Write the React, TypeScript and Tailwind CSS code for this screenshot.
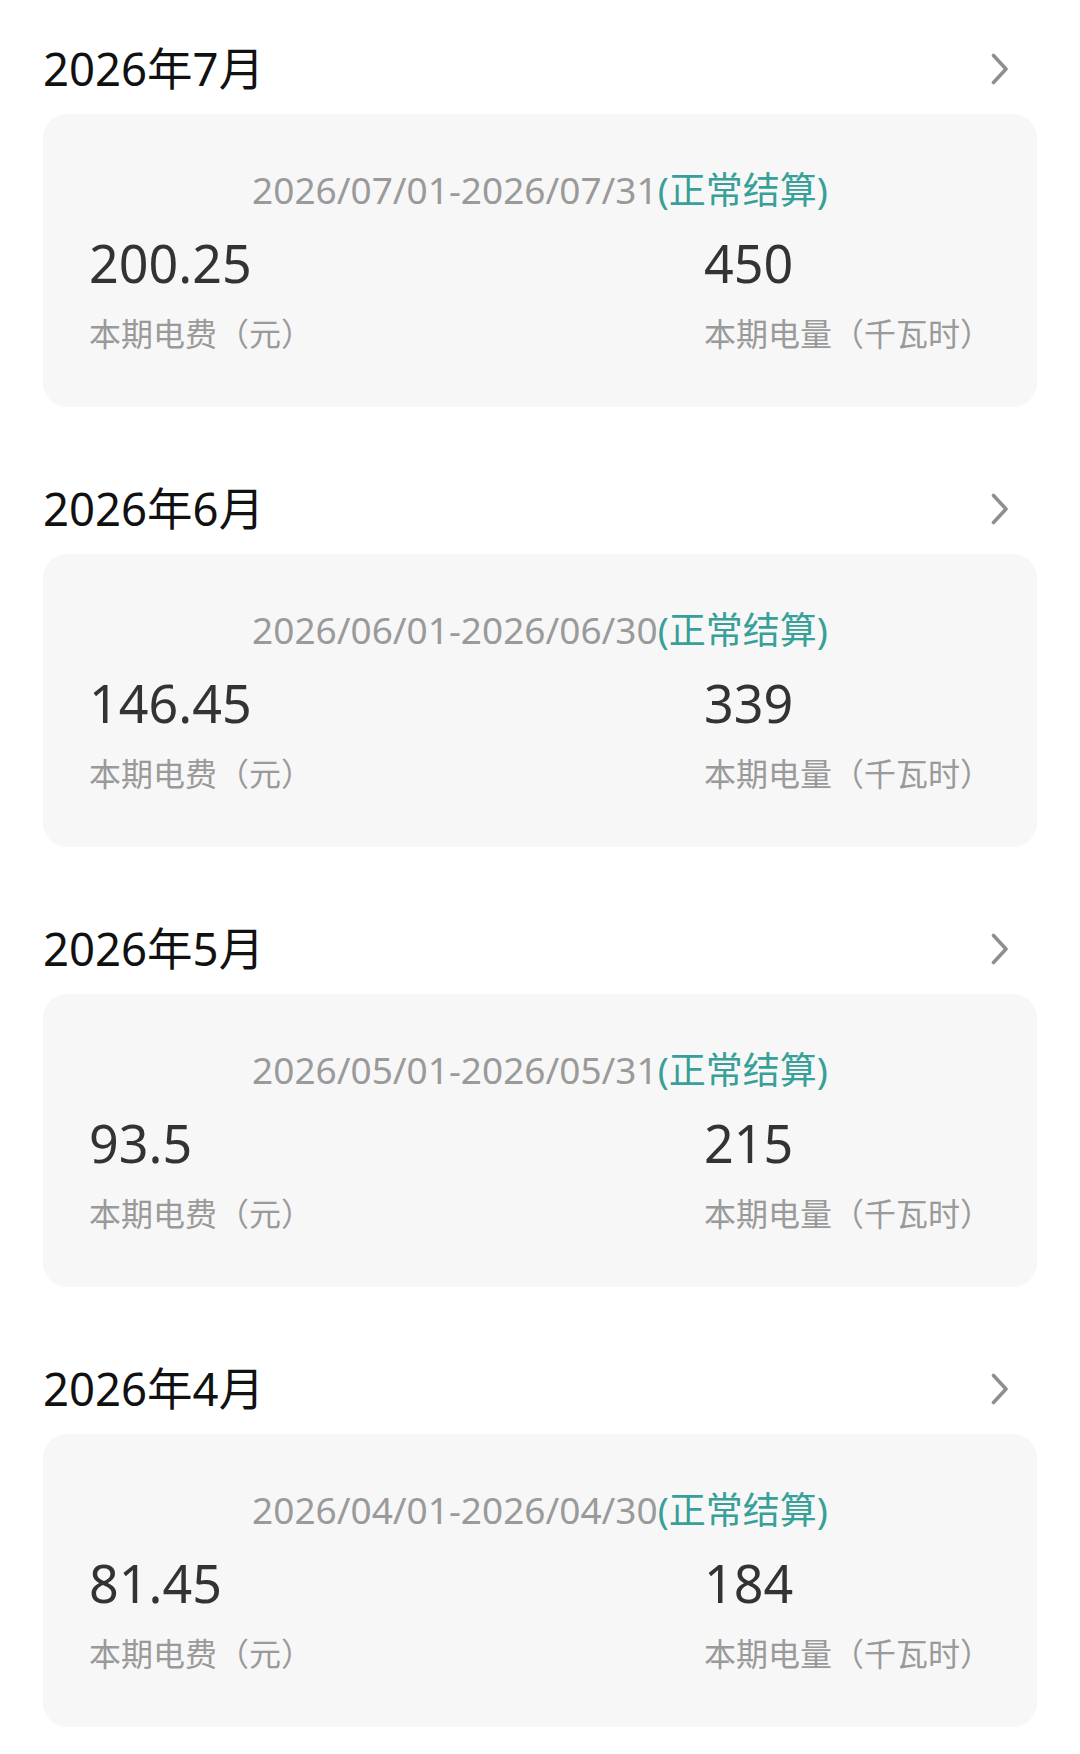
const bills = [
  { month: "2026年7月", range: "2026/07/01-2026/07/31", fee: "200.25", kwh: "450" },
  { month: "2026年6月", range: "2026/06/01-2026/06/30", fee: "146.45", kwh: "339" },
  { month: "2026年5月", range: "2026/05/01-2026/05/31", fee: "93.5", kwh: "215" },
  { month: "2026年4月", range: "2026/04/01-2026/04/30", fee: "81.45", kwh: "184" },
];

function Chevron() {
  return (
    <svg width="20" height="32" viewBox="0 0 20 32" fill="none">
      <path
        d="M3.5 2.5 L16 16 L3.5 29.5"
        stroke="#8f8f8f"
        strokeWidth="3.6"
        strokeLinecap="round"
        strokeLinejoin="round"
      />
    </svg>
  );
}

export default function App() {
  return (
    <div
      className="min-h-[1754px] w-[1080px] bg-white pt-[34px]"
      style={{ fontFamily: '"Noto Sans", "Noto Sans CJK SC", sans-serif' }}
    >
      {bills.map((b) => (
        <section key={b.month} className="mb-[67px]">
          <div className="flex h-[70px] items-center justify-between pl-[43px] pr-[70px]">
            <h2 className="text-[45.5px] leading-none font-normal text-[#111111]">{b.month}</h2>
            <Chevron />
          </div>

          <div className="mx-[43px] mt-[10px] h-[293px] rounded-[24px] bg-[#f7f7f7] pt-[54px]">
            <div className="text-center text-[37px] leading-[44px] text-[#9a9a9a]">
              {b.range}
              <span className="text-[#37a098]">(正常结算)</span>
            </div>

            <div className="mt-[25px] flex pl-[46px]">
              <div className="w-[615px]">
                <div className="text-[52px] leading-[52px] text-[#333333]">{b.fee}</div>
                <div className="mt-[30px] text-[32px] leading-[30px] text-[#9a9a9a]">本期电费（元）</div>
              </div>
              <div>
                <div className="text-[52px] leading-[52px] text-[#333333]">{b.kwh}</div>
                <div className="mt-[30px] text-[32px] leading-[30px] text-[#9a9a9a]">本期电量（千瓦时）</div>
              </div>
            </div>
          </div>
        </section>
      ))}
    </div>
  );
}
